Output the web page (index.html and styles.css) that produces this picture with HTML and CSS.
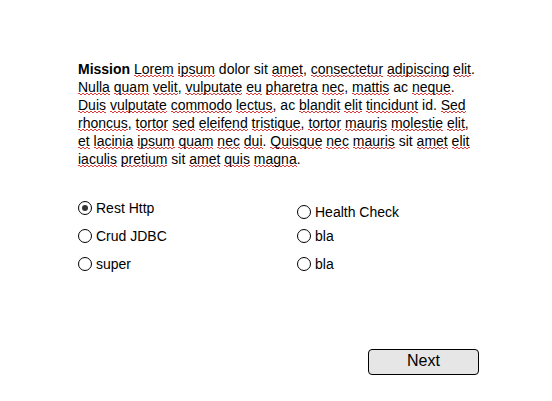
FILE: index.html
```html
<!DOCTYPE html>
<html>
<head>
<meta charset="utf-8">
<link rel="stylesheet" href="styles.css">
</head>
<body>
<div class="page">
  <p class="mission"><b>Mission</b> <span class="sp">Lorem</span> <span class="sp">ipsum</span> dolor sit <span class="sp">amet</span>, <span class="sp">consectetur</span> <span class="sp">adipiscing</span> <span class="sp">elit</span>. <span class="sp">Nulla</span> <span class="sp">quam</span> <span class="sp">velit</span>, <span class="sp">vulputate</span> <span class="sp">eu</span> <span class="sp">pharetra</span> <span class="sp">nec</span>, <span class="sp">mattis</span> ac <span class="sp">neque</span>. <span class="sp">Duis</span> <span class="sp">vulputate</span> <span class="sp">commodo</span> <span class="sp">lectus</span>, ac <span class="sp">blandit</span> <span class="sp">elit</span> <span class="sp">tincidunt</span> id. <span class="sp">Sed</span> <span class="sp">rhoncus</span>, <span class="sp">tortor</span> <span class="sp">sed</span> <span class="sp">eleifend</span> <span class="sp">tristique</span>, <span class="sp">tortor</span> <span class="sp">mauris</span> <span class="sp">molestie</span> <span class="sp">elit</span>, <span class="sp">et</span> <span class="sp">lacinia</span> <span class="sp">ipsum</span> <span class="sp">quam</span> <span class="sp">nec</span> <span class="sp">dui</span>. <span class="sp">Quisque</span> <span class="sp">nec</span> <span class="sp">mauris</span> sit <span class="sp">amet</span> <span class="sp">elit</span> <span class="sp">iaculis</span> <span class="sp">pretium</span> sit <span class="sp">amet</span> <span class="sp">quis</span> <span class="sp">magna</span>.</p>

  <div class="options">
    <label class="opt"><span class="radio checked"></span>Rest Http</label>
    <label class="opt opt-low"><span class="radio"></span>Health Check</label>
    <label class="opt"><span class="radio"></span>Crud JDBC</label>
    <label class="opt"><span class="radio"></span>bla</label>
    <label class="opt"><span class="radio"></span>super</label>
    <label class="opt"><span class="radio"></span>bla</label>
  </div>

  <div class="actions">
    <button class="btn">Next</button>
  </div>
</div>
</body>
</html>
```

FILE: styles.css
```css
html, body {
  margin: 0;
  padding: 0;
  background: #ffffff;
}

body {
  font-family: "Liberation Sans", Arial, sans-serif;
  color: #000000;
}

.page {
  width: 552px;
  height: 401px;
  box-sizing: border-box;
  padding: 60px 0 0 78px;
  display: flex;
  flex-direction: column;
}

.mission {
  margin: 0;
  width: 402px;
  font-size: 14px;
  line-height: 18px;
}

.sp {
  background-image:
    linear-gradient(90deg, #e03a3a 50%, transparent 50%),
    linear-gradient(90deg, transparent 50%, #e03a3a 50%);
  background-size: 4px 1px, 4px 1px;
  background-repeat: repeat-x, repeat-x;
  background-position: 0 calc(100% - 1px), 0 100%;
}

.options {
  margin-top: 26px;
  display: grid;
  grid-template-columns: 219px auto;
  grid-auto-rows: 28px;
}

.opt {
  display: flex;
  align-items: center;
  gap: 4px;
  height: 14px;
  font-size: 14px;
  line-height: 14px;
  margin-top: 7px;
}

.opt-low {
  margin-top: 11px;
}

.radio {
  width: 12px;
  height: 12px;
  border: 1px solid #000;
  border-radius: 50%;
  box-sizing: content-box;
  display: flex;
  align-items: center;
  justify-content: center;
  flex: none;
}

.radio.checked::after {
  content: "";
  width: 6px;
  height: 6px;
  border-radius: 50%;
  background: #333;
}

.actions {
  margin-top: auto;
  margin-bottom: 26px;
  display: flex;
  justify-content: flex-end;
  padding-right: 73px;
}

.btn {
  width: 111px;
  height: 26px;
  border: 1px solid #000;
  border-radius: 4px;
  background: #e6e6e6;
  font-family: "Liberation Sans", Arial, sans-serif;
  font-size: 16px;
  line-height: 20px;
  color: #000;
  padding: 0 0 3px;
}
```
